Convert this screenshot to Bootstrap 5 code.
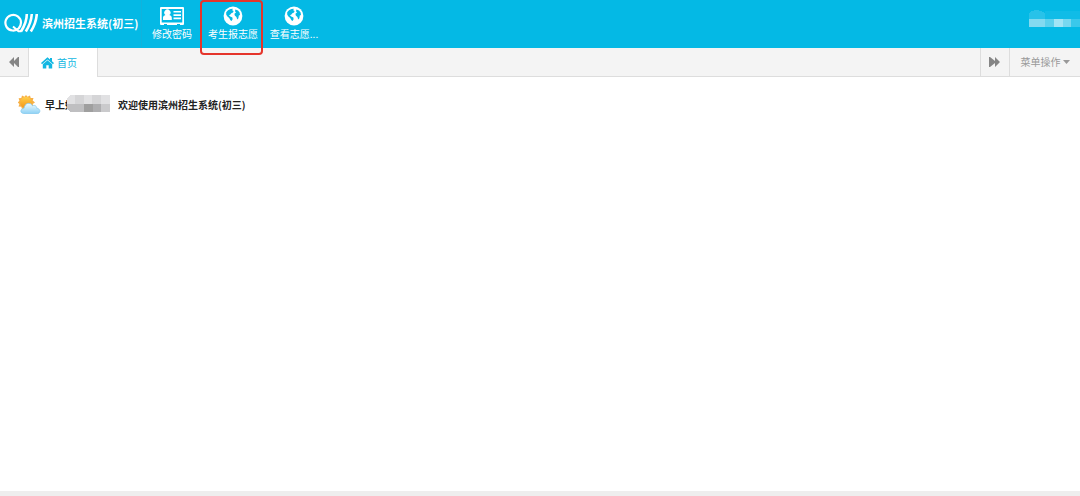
<!DOCTYPE html>
<html lang="zh-CN">
<head>
<meta charset="utf-8">
<meta name="viewport" content="width=device-width, initial-scale=1">
<title>滨州招生系统(初三)</title>
<link href="https://cdn.jsdelivr.net/npm/bootstrap@5.3.0/dist/css/bootstrap.min.css" rel="stylesheet">
<style>
body{font:10px/14px "Noto Sans CJK SC",sans-serif;color:#222;background:#fff}
.topbar{background:#04b9e5;height:48px;color:#fff}
.brand{width:142px;padding:0 0 3px 4px;gap:4px;font-size:11px;font-weight:700;color:#fff;border-right:1px solid #12b2dc}
.menu-item{width:61px;padding:6px 3px 0 2px;gap:1px;color:#fff}
.menu-item svg{height:20px}
.highlight{position:absolute;left:-3px;top:0;width:63px;height:55px;border:2px solid #e5352b;border-radius:4px;z-index:2;pointer-events:none}
.tabs{height:29px;background:#f4f4f4;border-bottom:1px solid #ddd}
.tabs button{border:0;background:none;padding:0;color:#888}
.tabs .scroll-btn{width:29px}
.tabs .rule-end{border-right:1px solid #ddd}
.tabs .rule-start{border-left:1px solid #ddd}
.tabs .home-tab{width:69px;height:29px;padding-left:12px;gap:3px;background:#fff;color:#12b7e2;border-right:1px solid #ddd}
.tabs .ops{width:71px;gap:2px;color:#999}
.greeting{padding:17px 18px;font-weight:700}
.mosaic{margin:0 7px 0 -9px}
.foot{height:5px;background:#eee}
</style>
</head>
<body class="d-flex flex-column min-vh-100">
<svg class="d-none" aria-hidden="true">
  <symbol id="globe" viewBox="0 0 20 20">
    <circle cx="10" cy="10" r="9.4" fill="#fff"/>
    <path fill="#04b9e5" d="M3.200 6.200 5 4.200 7.500 3 9.800 2.800 9.200 4.200 10.600 5 10 6.400 8.400 7.200 7.400 8.600 6 9.200 7.200 10.600 9.400 11.600 9.600 13.200 8.600 15 7.400 14.200 6.200 12 4.200 10.200 3.200 8.400ZM12.400 3.400 15 4.600 16.600 6.600 17 9 15.800 9.400 15.400 12.200 14.200 13.400 13.400 11 11.800 9.600 11.400 7.800 13 6.600 12 5.200Z"/>
  </symbol>
</svg>
<header class="topbar d-flex">
  <a class="brand d-flex align-items-center text-decoration-none text-nowrap" href="#">
    <svg width="34" height="20" viewBox="0 0 34 20" fill="none" stroke="#fff" aria-hidden="true">
      <path d="M14.800 15.200A7.800 7.800 0 1 1 17 9.500Q17 12.500 14.800 15.200" stroke-width="2.200"/>
      <path d="M9 13.500 14.500 18.300H17.500" stroke-width="2"/>
      <path d="M22.800 1C22.800 7 20.500 13 17 18.500M27.800 1C27.400 7 25.300 13 21.800 18.500M32.800 1C32.400 7 30.300 13 26.800 18.500" stroke-width="2.600"/>
    </svg>
    <span>滨州招生系统(初三)</span>
  </a>
  <nav class="d-flex" aria-label="主菜单">
    <a class="menu-item d-flex flex-column align-items-center text-decoration-none" href="#">
      <svg width="26" height="20" viewBox="0 0 26 20" aria-hidden="true">
        <path fill="#fff" fill-rule="evenodd" d="M2 1H24Q25 1 25 2V18Q25 19 24 19H21V18H18V19H8V18H5V19H2Q1 19 1 18V2Q1 1 2 1ZM2.700 3V16.500H23.300V3Z"/>
        <path fill="#fff" d="M14.500 5H22v1.600h-7.500zM14.500 8.300H22v1.600h-7.500zM14.500 11.600H22v1.600h-7.500zM4 14V11.500q0-2 2.400-2.600A3.100 3.100 0 1 1 10.400 8.900Q12.800 9.500 12.800 11.500v2.500Z"/>
      </svg>
      <span class="text-nowrap">修改密码</span>
    </a>
    <a class="menu-item position-relative d-flex flex-column align-items-center text-decoration-none" href="#">
      <svg width="20" height="20" aria-hidden="true"><use href="#globe"/></svg>
      <span class="text-nowrap">考生报志愿</span>
      <i class="highlight"></i>
    </a>
    <a class="menu-item d-flex flex-column align-items-center text-decoration-none" href="#">
      <svg width="20" height="20" aria-hidden="true"><use href="#globe"/></svg>
      <span class="text-nowrap">查看志愿...</span>
    </a>
  </nav>
  <svg class="ms-auto mt-2" width="52" height="20" viewBox="0 0 52 20" shape-rendering="crispEdges" role="img" aria-label="用户">
    <path fill="#28c2e9" d="M1 11V5q7-6 16 0v6z"/><path fill="#10bce7" d="M17 3h35v8H17z"/>
    <path fill="#83daf0" d="M1 11h16v8H1z"/><path fill="#5dd1ed" d="M17 11h9v8h-9z"/>
    <path fill="#a2e4f5" d="M26 11h9v8h-9z"/><path fill="#78d8f0" d="M35 11h8v8h-8z"/><path fill="#3ac8eb" d="M43 11h9v8h-9z"/>
  </svg>
</header>
<div class="tabs d-flex">
  <button class="scroll-btn rule-end d-flex align-items-center justify-content-center" type="button" aria-label="向左">
    <svg width="12" height="10" viewBox="0 0 12 10" fill="#858585"><path d="M1 5 6 0V4L10 0H11V10H10L6 6V10Z"/></svg>
  </button>
  <button class="home-tab d-flex align-items-center" type="button">
    <svg width="13" height="12" viewBox="0 0 13 12" fill="#12b7e2" aria-hidden="true"><path d="M0 6 6.500.3 9 2.500V1h2v3.200L13 6 12 7.200 6.500 2.400 1 7.200ZM1.800 7.300 6.500 3.200 11.200 7.300V11.500H7.700V8.300H5.300v3.200H1.800Z"/></svg>
    <span>首页</span>
  </button>
  <button class="scroll-btn rule-start ms-auto d-flex align-items-center justify-content-center" type="button" aria-label="向右">
    <svg width="12" height="10" viewBox="0 0 12 10" fill="#858585"><path d="M11 5 6 0V4L1 0H0V10H1L6 6V10Z"/></svg>
  </button>
  <button class="ops rule-start d-flex align-items-center justify-content-center" type="button">
    <span>菜单操作</span>
    <svg width="7" height="4" viewBox="0 0 7 4" fill="#999" aria-hidden="true"><path d="M0 0h7L3.500 4Z"/></svg>
  </button>
</div>
<main class="flex-grow-1">
  <div class="greeting d-flex align-items-center text-nowrap">
    <svg class="me-1" width="23" height="21" viewBox="0 0 23 21" aria-hidden="true">
      <defs>
        <linearGradient id="sun" x2="0" y2="1"><stop stop-color="#ffcf4a"/><stop offset="1" stop-color="#f49516"/></linearGradient>
        <linearGradient id="cloud" x2="0" y2="1"><stop stop-color="#f0fbff"/><stop offset="1" stop-color="#8fd2f5"/></linearGradient>
      </defs>
      <path fill="#f7b046" d="M8 1l1.500 1.800L12 1.500l.7 2.400 2.800.2-.8 2.500L17 8.500l-2.300 1.600.8 2.600-2.800.1L12 15.500l-2.500-1.400L8 16l-1.500-1.900L4 15.300l-.7-2.500-2.800-.2.900-2.500L-.3 8.500l1.700-1.700L.6 4.300l2.700-.3L4 1.500l2.500 1.300Z"/>
      <circle cx="8" cy="8.500" r="5.700" fill="url(#sun)"/>
      <path d="M5.500 19.500C1.500 19 2.500 14.500 6 14.300 6.500 9 12.500 7.500 14.500 11.800 17 10.500 19 12.500 18.800 14.400 23 14.500 22.500 19.500 19.500 19.500Z" fill="url(#cloud)" stroke="#7cc5ec" stroke-width=".7"/>
    </svg>
    <span>早上好</span>
    <svg class="mosaic position-relative" width="45" height="19" viewBox="0 0 45 19" shape-rendering="crispEdges" role="img" aria-label="姓名">
      <path fill="#e1e1e3" d="M1 9V3L5 0H44V9Z"/><path fill="#d5d5d7" d="M9 0h9v9H9zM26 0h9v9h-9z"/>
      <path fill="#bfbfc1" d="M1 9h17v8H4L1 14z"/><path fill="#9f9f9f" d="M18 9h9v8h-9z"/><path fill="#aeaeb0" d="M27 9h8v8h-8z"/><path fill="#cacacc" d="M35 9h9v8h-9z"/>
    </svg>
    <span>欢迎使用滨州招生系统(初三)</span>
  </div>
</main>
<footer class="foot"></footer>
<script src="https://cdn.jsdelivr.net/npm/bootstrap@5.3.0/dist/js/bootstrap.bundle.min.js"></script>
</body>
</html>
